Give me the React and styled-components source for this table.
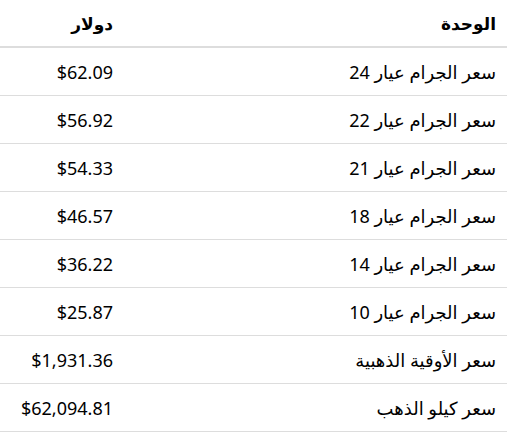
import React from 'react';
import styled, { createGlobalStyle } from 'styled-components';

const GlobalStyle = createGlobalStyle`
  body {
    margin: 0;
    background: #fff;
    font-family: "Noto Sans", "DejaVu Sans", sans-serif;
    color: #000;
  }
`;

const PriceTable = styled.table`
  width: 507px;
  border-collapse: collapse;
  direction: rtl;
`;

const HeadCell = styled.th`
  text-align: right;
  font-size: 17px;
  font-weight: 700;
  height: 46px;
  padding: 0 11px;
  vertical-align: middle;
  border-bottom: 2px solid #dddddd;
`;

const Cell = styled.td`
  text-align: right;
  font-size: 18px;
  height: 47px;
  padding: 0 11px;
  vertical-align: middle;
  border-bottom: 1px solid #dddddd;
  width: ${p => (p.$narrow ? '102px' : 'auto')};
`;

const rows = [
  ['سعر الجرام عيار 24', '$62.09'],
  ['سعر الجرام عيار 22', '$56.92'],
  ['سعر الجرام عيار 21', '$54.33'],
  ['سعر الجرام عيار 18', '$46.57'],
  ['سعر الجرام عيار 14', '$36.22'],
  ['سعر الجرام عيار 10', '$25.87'],
  ['سعر الأوقية الذهبية', '$1,931.36'],
  ['سعر كيلو الذهب', '$62,094.81'],
];

export default function App() {
  return (
    <>
      <GlobalStyle />
      <PriceTable>
        <thead>
          <tr>
            <HeadCell>الوحدة</HeadCell>
            <HeadCell>دولار</HeadCell>
          </tr>
        </thead>
        <tbody>
          {rows.map(([unit, price]) => (
            <tr key={unit}>
              <Cell>{unit}</Cell>
              <Cell $narrow>{price}</Cell>
            </tr>
          ))}
        </tbody>
      </PriceTable>
    </>
  );
}
